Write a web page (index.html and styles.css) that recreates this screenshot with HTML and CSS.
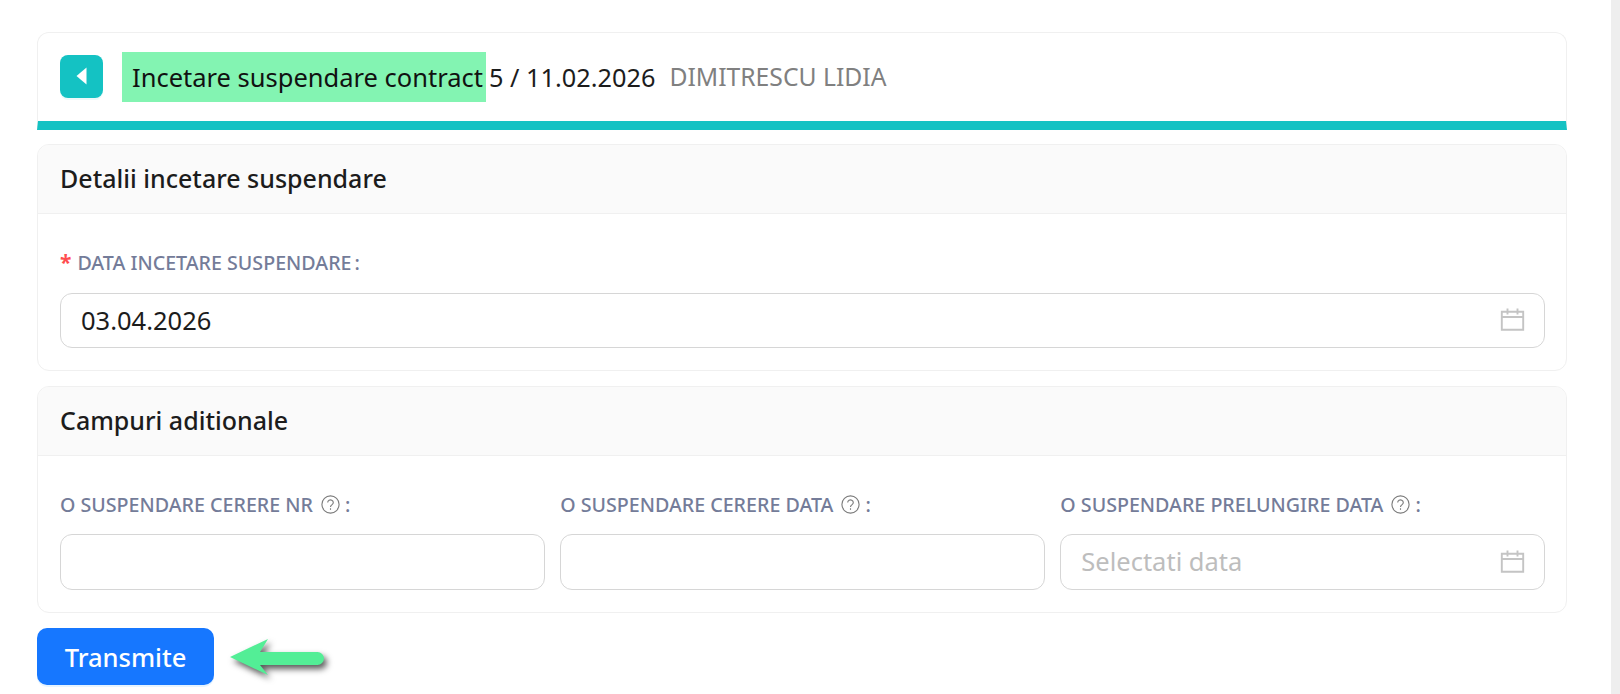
FILE: index.html
```html
<!DOCTYPE html>
<html lang="ro">
<head>
<meta charset="utf-8">
<title>Incetare suspendare contract</title>
<link rel="stylesheet" href="styles.css">
</head>
<body>
<div class="page">
  <main class="main">
    <header class="title-card">
      <button class="back" type="button" aria-label="Inapoi">
        <svg width="11" height="18" viewBox="0 0 11 18"><path d="M10.5 0.5V17.5L0.5 9Z" fill="#fff"/></svg>
      </button>
      <h1 class="title"><mark class="hl">Incetare suspendare contract</mark> <span class="num">5 / 11.02.2026</span><span class="person">DIMITRESCU LIDIA</span></h1>
    </header>

    <section class="card">
      <h2 class="card-head">Detalii incetare suspendare</h2>
      <div class="card-body">
        <div class="field">
          <label class="label label-req"><span class="req">*</span>DATA INCETARE SUSPENDARE<span class="colon colon-near">:</span></label>
          <div class="input input-tight"><span class="value">03.04.2026</span>
            <svg class="cal" width="25" height="23" viewBox="0 0 25 23" fill="none" stroke="#c4c4c4" stroke-width="1.9"><path d="M1.8 3.8H23.2V21.8H1.8ZM1.8 9H23.2M7.5 0.5V6.5M17.5 0.5V6.5"/></svg>
          </div>
        </div>
      </div>
    </section>

    <section class="card">
      <h2 class="card-head">Campuri aditionale</h2>
      <div class="card-body">
        <div class="grid">
          <div class="field">
            <label class="label">O SUSPENDARE CERERE NR<svg class="help" width="19" height="19" viewBox="0 0 19 19" fill="none" stroke="#7b7b7b" stroke-width="1.1"><circle cx="9.5" cy="9.5" r="8.6"/><path d="M6.7 7.5a2.8 2.6 0 1 1 4.4 2.1c-1 .7-1.6 1.2-1.6 2.4"/><path d="M9.5 13.3v1.5"/></svg><span class="colon">:</span></label>
            <div class="input"></div>
          </div>
          <div class="field">
            <label class="label">O SUSPENDARE CERERE DATA<svg class="help" width="19" height="19" viewBox="0 0 19 19" fill="none" stroke="#7b7b7b" stroke-width="1.1"><circle cx="9.5" cy="9.5" r="8.6"/><path d="M6.7 7.5a2.8 2.6 0 1 1 4.4 2.1c-1 .7-1.6 1.2-1.6 2.4"/><path d="M9.5 13.3v1.5"/></svg><span class="colon">:</span></label>
            <div class="input"></div>
          </div>
          <div class="field">
            <label class="label">O SUSPENDARE PRELUNGIRE DATA<svg class="help" width="19" height="19" viewBox="0 0 19 19" fill="none" stroke="#7b7b7b" stroke-width="1.1"><circle cx="9.5" cy="9.5" r="8.6"/><path d="M6.7 7.5a2.8 2.6 0 1 1 4.4 2.1c-1 .7-1.6 1.2-1.6 2.4"/><path d="M9.5 13.3v1.5"/></svg><span class="colon">:</span></label>
            <div class="input"><span class="placeholder">Selectati data</span>
              <svg class="cal" width="25" height="23" viewBox="0 0 25 23" fill="none" stroke="#c4c4c4" stroke-width="1.9"><path d="M1.8 3.8H23.2V21.8H1.8ZM1.8 9H23.2M7.5 0.5V6.5M17.5 0.5V6.5"/></svg>
            </div>
          </div>
        </div>
      </div>
    </section>

    <div class="actions">
      <button class="submit" type="button">Transmite</button>
      <svg class="arrow" width="106" height="50" viewBox="0 0 106 50">
        <path d="M1 19L39 1L31 14H88.5a6.5 6.5 0 0 1 0 13H31L39 37Z" fill="#53ee96"/>
      </svg>
    </div>
  </main>
  <div class="scrollbar"></div>
</div>
</body>
</html>
```
FILE: styles.css
```css
* { box-sizing: border-box; }
html, body { margin: 0; height: 100%; overflow: hidden; background: #fff; }
body { font-family: "Noto Sans", "Open Sans", sans-serif; color: #1c1c1c; }
.page { display: flex; height: 694px; }
.main { flex: 1; min-width: 0; padding: 32px 44px 0 37px; }
.scrollbar { width: 9px; background: #eeeeee; }

.title-card {
  display: flex; align-items: center; gap: 19px;
  height: 98px; padding: 0 22px;
  border: 1px solid #f0f0f0; border-bottom: 9px solid #14c2c3;
  border-radius: 12px 12px 0 0;
}
.back {
  width: 43px; height: 43px; padding: 0; border: 0; border-radius: 8px;
  margin-bottom: 2px;
  background: #14c2c3; display: flex; align-items: center; justify-content: center;
  box-shadow: 0 2px 0 rgba(20, 194, 195, .08);
}
.title { margin: 0; font-size: 25.5px; font-weight: 400; line-height: 50px; display: flex; white-space: pre; }
.hl { background: #83f4b2; color: #111; padding: 0 3px 0 10px; }
.num { color: #1c1c1c; margin-left: 3px; font-size: 25.3px; }
.person { color: #808080; margin-left: 14px; font-size: 24.7px; }

.card { margin-top: 14px; border: 1px solid #f0f0f0; border-radius: 12px; overflow: hidden; }
.card + .card { margin-top: 15px; }
.card-head {
  margin: 0; height: 69px; padding: 0 22px; background: #fafafa;
  border-bottom: 1px solid #f0f0f0;
  font-size: 25px; font-weight: 500; line-height: 67px; color: #1c1c1c;
}
.card-body { padding: 35px 21px 22px 22px; }
.grid { display: grid; grid-template-columns: repeat(3, 1fr); gap: 15.5px; }
.label {
  display: flex; align-items: center; height: 26px; margin-bottom: 17px;
  font-size: 19.65px; font-weight: 500; color: #747c99; white-space: nowrap;
}
.label-req { margin-bottom: 18px; }
.req { color: #ff4d4f; font-size: 21px; font-weight: 700; margin-right: 6px; line-height: 18px; }
.colon { margin-left: 5px; }
.colon-near { margin-left: 3px; }
.help { margin-left: 8px; }
.input {
  display: flex; align-items: center; justify-content: space-between;
  height: 56px; padding: 0 19px 2px 20px;
  border: 1px solid #d6d6d6; border-radius: 12px; background: #fff;
  font-size: 25.5px;
}
.input-tight { height: 55px; }
.placeholder { color: #bdbdbd; }
.value { color: #1c1c1c; }
.cal { flex: none; }

.actions { position: relative; margin-top: 15px; }
.submit {
  display: block; width: 177px; height: 57px; padding: 0; border: 0; border-radius: 10px;
  background: #1677ff; color: #fff; font: 500 25.5px "Noto Sans", sans-serif;
  box-shadow: 0 2px 0 rgba(5, 145, 255, .1);
}
.arrow {
  position: absolute; left: 192px; top: 10px;
  overflow: visible; filter: drop-shadow(3px 4px 3px rgba(0, 0, 0, .65));
}
```
